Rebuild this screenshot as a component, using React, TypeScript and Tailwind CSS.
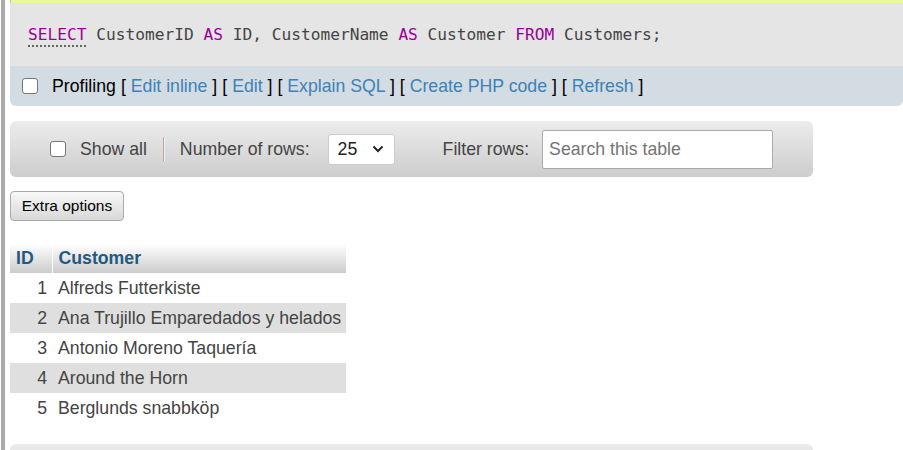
import React from "react";

const customers = [
  { id: 1, name: "Alfreds Futterkiste" },
  { id: 2, name: "Ana Trujillo Emparedados y helados" },
  { id: 3, name: "Antonio Moreno Taquería" },
  { id: 4, name: "Around the Horn" },
  { id: 5, name: "Berglunds snabbköp" },
];

const Check = () => (
  <input
    type="checkbox"
    className="appearance-none w-4 h-4 shrink-0 bg-white border border-[#767676] rounded-[3px]"
  />
);

const Links = ["Edit inline", "Edit", "Explain SQL", "Create PHP code", "Refresh"];

const App = () => {
  return (
    <div className="w-[903px] h-[450px] overflow-hidden bg-white pl-[1px] font-['Liberation_Sans',Arial,sans-serif] text-[17.7px]">
      <div className="h-full border-l-4 border-[#aaaaaa] pl-[5px]">
        {/* tail of the message box above */}
        <div className="h-[3px] bg-[#ebf7a0] border-l border-[#c6d97a]"></div>

        {/* SQL query */}
        <div className="h-[63px] bg-[#e5e5e5] flex items-center pl-[18px] pt-[2px] font-['DejaVu_Sans_Mono','Liberation_Mono',monospace] text-[16.2px] text-[#444] whitespace-pre">
          <span className="text-[#990099] underline decoration-dotted decoration-[#444] underline-offset-[5px]">SELECT</span>
          <span> CustomerID </span>
          <span className="text-[#990099]">AS</span>
          <span> ID, CustomerName </span>
          <span className="text-[#990099]">AS</span>
          <span> Customer </span>
          <span className="text-[#990099]">FROM</span>
          <span> Customers;</span>
        </div>

        {/* profiling / links */}
        <div className="h-[40px] bg-[#d4dce3] rounded-b-[6px] flex items-center pl-[12px] text-black">
          <Check />
          <span className="ml-[14px]">Profiling</span>
          {Links.map((l) => (
            <span key={l} className="ml-[5px]">
              [ <a className="text-[#3b82b8]">{l}</a> ]
            </span>
          ))}
        </div>

        {/* navigation bar */}
        <div className="mt-[15px] w-[803px] h-[56px] rounded-[6px] bg-gradient-to-b from-[#ececec] to-[#cdcdcd] flex items-center pl-[40px] text-[#444]">
          <Check />
          <span className="ml-[14px]">Show all</span>
          <span className="ml-[16px] w-[2px] h-[24px] bg-[#c3a593] border-r border-[#e8f0ff]"></span>
          <span className="ml-[15px]">Number of rows:</span>
          <div className="ml-[18px] w-[67px] h-[31px] bg-white border border-[#cccccc] rounded-[3px] flex items-center justify-between pl-[9px] pr-[10px] text-[#222]">
            <span>25</span>
            <svg width="12" height="8" viewBox="0 0 12 8" fill="none" stroke="#222" strokeWidth="2">
              <path d="M1.5 1.5 L6 6 L10.5 1.5" />
            </svg>
          </div>
          <span className="ml-[48px]">Filter rows:</span>
          <div className="ml-[13px] w-[231px] h-[39px] bg-white border border-[#aaaaaa] rounded-[2px] flex items-center pl-[6px] text-[#757575]">
            Search this table
          </div>
        </div>

        {/* extra options */}
        <button className="mt-[14px] h-[30px] w-[114px] rounded-[4px] border border-[#aaaaaa] bg-gradient-to-b from-[#f8f8f8] to-[#d8d8d8] text-[15.5px] text-black flex items-center justify-center">
          Extra options
        </button>

        {/* results */}
        <table className="mt-[23px] border-collapse text-[#444]">
          <thead>
            <tr className="h-[29px] bg-gradient-to-b from-white to-[#cccccc] text-[#235a81] font-bold">
              <th className="w-[42px] text-left pl-[6px] border-r border-white">ID</th>
              <th className="w-[294px] text-left pl-[6px]">Customer</th>
            </tr>
          </thead>
          <tbody>
            {customers.map((c) => (
              <tr key={c.id} className={`h-[30px] ${c.id % 2 === 0 ? "bg-[#dfdfdf]" : "bg-white"}`}>
                <td className="text-right pr-[5px]">{c.id}</td>
                <td className="pl-[6px]">{c.name}</td>
              </tr>
            ))}
          </tbody>
        </table>

        {/* next navigation bar, cut off */}
        <div className="mt-[21px] w-[803px] h-[40px] rounded-[6px] bg-gradient-to-b from-[#ececec] to-[#cdcdcd]"></div>
      </div>
    </div>
  );
};

export default App;
